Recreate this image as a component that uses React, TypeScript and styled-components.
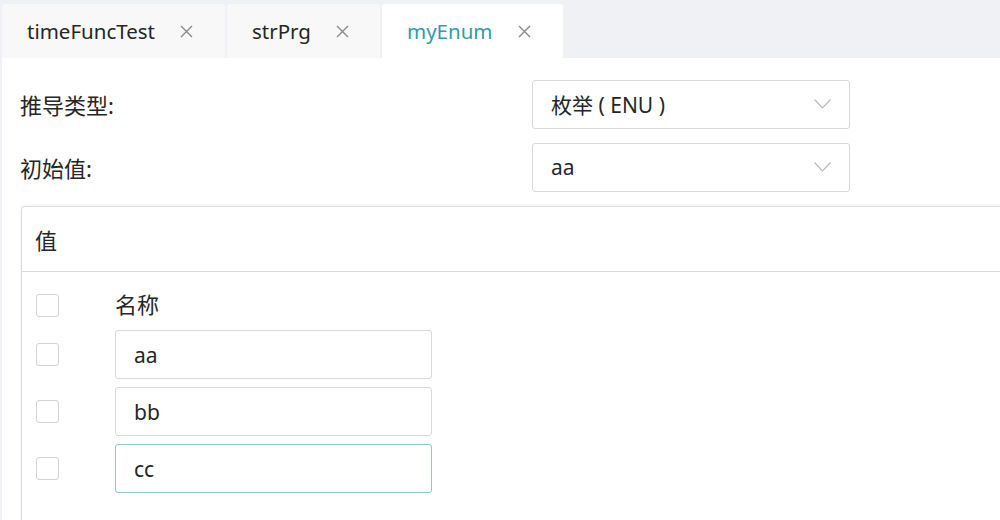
import React from 'react';
import styled, { createGlobalStyle } from 'styled-components';

const GlobalStyle = createGlobalStyle`
  html, body {
    margin: 0;
    padding: 0;
    background: #f0f1f5;
  }
  body {
    font-family: "Noto Sans", "Noto Sans CJK SC", sans-serif;
    color: #262626;
  }
`;

const Page = styled.div`
  width: 1000px;
  height: 520px;
  padding-left: 2px;
  box-sizing: border-box;
  display: flex;
  flex-direction: column;
  overflow: hidden;
  background: #f0f1f5;
`;

const TabBar = styled.div`
  display: flex;
  align-items: flex-end;
  gap: 2px;
  height: 58px;
  flex-shrink: 0;
`;

const Tab = styled.div<{ $active?: boolean; $width: number }>`
  width: ${(p) => p.$width}px;
  height: 54px;
  box-sizing: border-box;
  padding-left: 25px;
  display: flex;
  align-items: center;
  background: ${(p) => (p.$active ? '#ffffff' : '#f8f8f9')};
  border-radius: 3px 3px 0 0;
  font-size: 20.5px;
  color: ${(p) => (p.$active ? '#2a9fa8' : '#262626')};
`;

const TabLabel = styled.span`
  flex: 0 0 auto;
`;

const CloseButton = styled.span`
  display: inline-flex;
  margin-left: 25px;
  width: 13px;
  height: 13px;
`;

const Content = styled.div`
  flex: 1;
  background: #fff;
  padding: 22px 0 0 18px;
  overflow: hidden;
`;

const FormRow = styled.div`
  display: flex;
  align-items: center;
  height: 48px;
  margin-bottom: 15px;
`;

const Label = styled.div`
  width: 512px;
  font-size: 22px;
`;

const Select = styled.div`
  width: 318px;
  height: 49px;
  box-sizing: border-box;
  border: 1px solid #d9d9d9;
  border-radius: 3px;
  display: flex;
  align-items: center;
  justify-content: space-between;
  padding: 0 18px 0 18px;
  font-size: 21px;
`;

const Panel = styled.div`
  margin: 0 -20px 0 1px;
  border: 1px solid #dcdcdc;
  border-radius: 4px;
  box-shadow: 0 -1px 4px rgba(0, 0, 0, 0.06);
  height: 400px;
  background: #fff;
`;

const PanelHeader = styled.div`
  height: 64px;
  display: flex;
  align-items: center;
  padding-left: 13px;
  font-size: 22px;
  border-bottom: 1px solid #dcdcdc;
`;

const Grid = styled.div`
  display: grid;
  grid-template-columns: 79px 317px;
  grid-auto-rows: 49px;
  grid-template-rows: 34px;
  row-gap: 8px;
  padding: 16px 0 0 14px;
  align-items: center;
`;

const Checkbox = styled.span`
  display: block;
  width: 23px;
  height: 23px;
  box-sizing: border-box;
  border: 1px solid #d3d3d3;
  border-radius: 3px;
  background: #fff;
`;

const ColumnTitle = styled.div`
  font-size: 22px;
  line-height: 1;
  padding-bottom: 3px;
`;

const NameInput = styled.div<{ $focused?: boolean }>`
  height: 49px;
  box-sizing: border-box;
  border: 1px solid ${(p) => (p.$focused ? '#93c6c8' : '#d9d9d9')};
  border-radius: 3px;
  display: flex;
  align-items: center;
  padding-left: 18px;
  font-size: 21px;
`;

const CloseIcon = () => (
  <svg width="13" height="13" viewBox="0 0 13 13">
    <path d="M1 1 L12 12 M12 1 L1 12" stroke="#8a8a8a" strokeWidth="1.4" fill="none" />
  </svg>
);

const Chevron = () => (
  <svg width="17" height="10" viewBox="0 0 17 10">
    <polyline points="0.5,0.5 8.5,9 16.5,0.5" stroke="#b8b8b8" strokeWidth="1.1" fill="none" />
  </svg>
);

const tabs = [
  { name: 'timeFuncTest', width: 223 },
  { name: 'strPrg', width: 153 },
  { name: 'myEnum', width: 181, active: true },
];

const values = ['aa', 'bb', 'cc'];

const App = () => (
  <>
    <GlobalStyle />
    <Page>
      <TabBar>
        {tabs.map((t) => (
          <Tab key={t.name} $width={t.width} $active={t.active}>
            <TabLabel>{t.name}</TabLabel>
            <CloseButton>
              <CloseIcon />
            </CloseButton>
          </Tab>
        ))}
      </TabBar>
      <Content>
        <FormRow>
          <Label>推导类型:</Label>
          <Select>
            <span>枚举 ( ENU )</span>
            <Chevron />
          </Select>
        </FormRow>
        <FormRow>
          <Label>初始值:</Label>
          <Select>
            <span>aa</span>
            <Chevron />
          </Select>
        </FormRow>
        <Panel>
          <PanelHeader>值</PanelHeader>
          <Grid>
            <Checkbox />
            <ColumnTitle>名称</ColumnTitle>
            {values.map((v, i) => (
              <React.Fragment key={v}>
                <Checkbox />
                <NameInput $focused={i === values.length - 1}>{v}</NameInput>
              </React.Fragment>
            ))}
          </Grid>
        </Panel>
      </Content>
    </Page>
  </>
);

export default App;
